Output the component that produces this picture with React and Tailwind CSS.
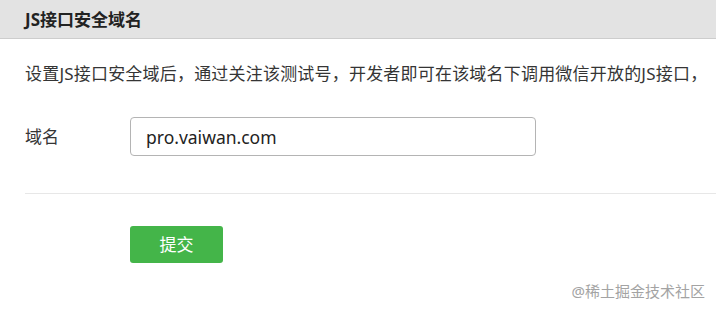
export default function App() {
  return (
    <div
      className="relative h-[310px] w-[716px] overflow-hidden bg-white text-[#353535]"
      style={{ fontFamily: '"Microsoft YaHei", "Noto Sans", "Noto Sans CJK SC", sans-serif' }}
    >
      <div className="flex h-[39px] items-center border-b border-[#cdcdcd] bg-[#e3e3e3] pl-[25px]">
        <h2 className="text-[17px] font-bold leading-none text-[#222]">JS接口安全域名</h2>
      </div>

      <div className="pl-[25px]">
        <p className="mt-[23px] whitespace-nowrap text-[17px] leading-[24px] tracking-[0.2px]">
          设置JS接口安全域后，通过关注该测试号，开发者即可在该域名下调用微信开放的JS接口，
        </p>

        <div className="mt-[31px] flex items-center">
          <label className="w-[105px] text-[17px]">域名</label>
          <input
            defaultValue="pro.vaiwan.com"
            className="h-[39px] w-[406px] rounded-[4px] border border-[#b4b4b4] px-[15px] text-[17.5px] text-[#222] outline-none"
          />
        </div>

        <div className="mt-[37px] border-t border-[#e7e7e7]" />

        <button className="ml-[105px] mt-[32px] h-[37px] w-[93px] rounded-[3px] bg-[#44b549] text-[17px] text-white">
          提交
        </button>
      </div>

      <span className="absolute right-[11px] top-[281px] text-[15px] leading-[20px] text-[#a3a3a3]">
        @稀土掘金技术社区
      </span>
    </div>
  );
}
